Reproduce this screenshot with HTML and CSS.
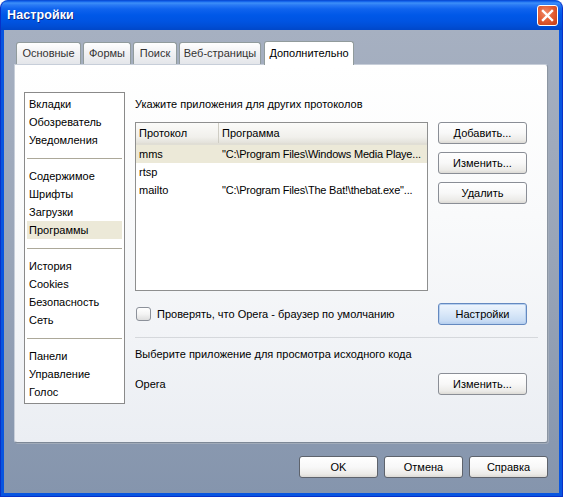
FILE: index.html
```html
<!DOCTYPE html>
<html lang="ru">
<head>
<meta charset="utf-8">
<title>Настройки</title>
<link rel="stylesheet" href="styles.css">
</head>
<body>
<div class="window">
  <div class="titlebar">
    <span class="title">Настройки</span>
    <div class="close">
      <svg width="21" height="21" viewBox="0 0 21 21"><path d="M6 6 L15 15 M15 6 L6 15" stroke="#fff" stroke-width="2.4" stroke-linecap="square"/></svg>
    </div>
  </div>
  <div class="client">
    <div class="tabs">
      <div class="tab t1">Основные</div>
      <div class="tab t2">Формы</div>
      <div class="tab t3">Поиск</div>
      <div class="tab t4">Веб-страницы</div>
      <div class="tab t5 active">Дополнительно</div>
    </div>
    <div class="panel">
      <div class="sidebar">
        <div class="item">Вкладки</div>
        <div class="item">Обозреватель</div>
        <div class="item">Уведомления</div>
        <div class="sep"></div>
        <div class="item">Содержимое</div>
        <div class="item">Шрифты</div>
        <div class="item">Загрузки</div>
        <div class="item sel">Программы</div>
        <div class="sep"></div>
        <div class="item">История</div>
        <div class="item">Cookies</div>
        <div class="item">Безопасность</div>
        <div class="item">Сеть</div>
        <div class="sep"></div>
        <div class="item">Панели</div>
        <div class="item">Управление</div>
        <div class="item">Голос</div>
      </div>
      <div class="content">
        <div class="label">Укажите приложения для других протоколов</div>
        <div class="proto">
          <div class="list">
            <div class="lhead"><div class="c1">Протокол</div><div class="c2">Программа</div></div>
            <div class="row sel"><div class="c1">mms</div><div class="c2">"C:\Program Files\Windows Media Playe...</div></div>
            <div class="row"><div class="c1">rtsp</div><div class="c2"></div></div>
            <div class="row"><div class="c1">mailto</div><div class="c2">"C:\Program Files\The Bat!\thebat.exe"...</div></div>
          </div>
          <div class="btncol">
            <div class="btn">Добавить...</div>
            <div class="btn">Изменить...</div>
            <div class="btn">Удалить</div>
          </div>
        </div>
        <div class="checkrow">
          <span class="cb"></span>
          <span class="cblabel">Проверять, что Opera - браузер по умолчанию</span>
          <div class="btn default">Настройки</div>
        </div>
        <div class="hsep"></div>
        <div class="label2">Выберите приложение для просмотра исходного кода</div>
        <div class="oprow">
          <span class="opname">Opera</span>
          <div class="btn">Изменить...</div>
        </div>
      </div>
    </div>
    <div class="footer">
      <div class="btn fbtn">OK</div>
      <div class="btn fbtn">Отмена</div>
      <div class="btn fbtn">Справка</div>
    </div>
  </div>
</div>
</body>
</html>
```
FILE: styles.css
```css
html, body {
  margin: 0;
  padding: 0;
  background: #ffffff;
}
body {
  font-family: "Liberation Sans", Arial, sans-serif;
  font-size: 11px;
  color: #000;
}
.window {
  width: 563px;
  height: 497px;
  box-sizing: border-box;
  background: #0855e0;
  border-radius: 8px 8px 0 0;
  border: 1px solid #0831c8;
  border-top-color: #0a4ed8;
  display: flex;
  flex-direction: column;
}
.titlebar {
  height: 29px;
  flex: none;
  display: flex;
  align-items: center;
  justify-content: space-between;
  padding: 0 4px 0 6px;
  border-radius: 7px 7px 0 0;
  background: linear-gradient(to bottom, #0a5ae8 0px, #3d8ff8 2px, #2a7af5 4px, #0f63ee 8px, #0058e8 14px, #0054e2 20px, #004ed6 25px, #0047c8 29px);
}
.title {
  color: #fff;
  font-weight: bold;
  font-size: 12.5px;
  text-shadow: 1px 1px 0 #0a2a8a;
  letter-spacing: 0.1px;
  padding-bottom: 1px;
}
.close {
  width: 21px;
  height: 21px;
  box-sizing: border-box;
  border: 1px solid #fff;
  border-radius: 3px;
  background: radial-gradient(circle at 40% 35%, #f08a68 0%, #e25b30 50%, #c23c14 100%);
  margin-bottom: 1px;
  display: flex;
}
.close svg {
  margin: -1px;
}
.client {
  flex: 1;
  margin: 0 3px 3px 3px;
  background: linear-gradient(to bottom, #a6b0c1 0%, #98a4b7 50%, #8595ad 100%);
  padding: 11px 11px 0 10px;
  display: flex;
  flex-direction: column;
}
.tabs {
  display: flex;
  align-items: flex-end;
  gap: 2px;
  height: 24px;
  margin-left: 2px;
  margin-bottom: -1px;
  position: relative;
  z-index: 2;
}
.tab {
  height: 22px;
  margin-bottom: 1px;
  box-sizing: border-box;
  border: 1px solid #919b9c;
  border-bottom: none;
  border-radius: 3px 3px 0 0;
  background: linear-gradient(to bottom, #ffffff 0%, #f3f3f5 40%, #e4e6ea 100%);
  display: flex;
  align-items: center;
  justify-content: center;
  padding-bottom: 1px;
  color: #333;
}
.t1 { width: 65px; }
.t2 { width: 48px; }
.t3 { width: 44px; }
.t4 { width: 82px; }
.t5 { width: 90px; margin-left: 1px; }
.tab.active {
  height: 24px;
  margin-bottom: 0;
  background: #ffffff;
  color: #000;
  padding-bottom: 2px;
}
.panel {
  width: 534px;
  height: 379px;
  flex: none;
  box-sizing: border-box;
  border: 1px solid;
  border-color: #c7ced9 #8b95a2 #7d8896 #c7ced9;
  border-radius: 0 3px 3px 3px;
  box-shadow: 1px 1px 0 #a2acba;
  background: linear-gradient(to bottom, #ffffff 0%, #f9fafb 40%, #ebeef3 100%);
  padding: 27px 0 0 9px;
  display: flex;
  align-items: flex-start;
}
.sidebar {
  width: 101px;
  box-sizing: border-box;
  border: 1px solid #8a8a8a;
  background: #fff;
  padding: 2px 1px 2px 1px;
}
.item {
  height: 18px;
  line-height: 18px;
  padding-left: 2px;
  margin: 0 1px;
  white-space: nowrap;
}
.item.sel {
  background: #ece9d8;
}
.sep {
  height: 1px;
  background: #aca899;
  margin: 9px 1px 8px 1px;
}
.content {
  margin-left: 10px;
  width: 403px;
  display: flex;
  flex-direction: column;
}
.label {
  height: 18px;
  line-height: 18px;
  margin-top: 3px;
}
.proto {
  margin-top: 9px;
  display: flex;
  align-items: flex-start;
  gap: 10px;
}
.list {
  width: 293px;
  height: 169px;
  box-sizing: border-box;
  border: 1px solid #8e8f8f;
  background: #fff;
}
.lhead {
  display: flex;
  height: 22px;
  box-sizing: border-box;
  background: linear-gradient(to bottom, #fbfbf9 0%, #f1f0ec 70%, #e3e1da 100%);
  border-bottom: 2px solid #e0ded5;
}
.lhead .c1 {
  border-right: 1px solid #cfcdc4;
}
.c1, .c2 {
  line-height: 18px;
  white-space: nowrap;
  overflow: hidden;
}
.lhead .c1, .lhead .c2 {
  line-height: 20px;
}
.c1 {
  width: 79px;
  padding-left: 3px;
  flex: none;
}
.c2 {
  flex: 1;
  padding-left: 3px;
}
.row {
  display: flex;
  height: 18px;
}
.row .c2 {
  padding-left: 4px;
  letter-spacing: -0.2px;
}
.row.sel {
  background: #ece9d8;
}
.btncol {
  display: flex;
  flex-direction: column;
  gap: 8px;
}
.btn {
  width: 89px;
  height: 22px;
  box-sizing: border-box;
  border: 1px solid #8a8e96;
  border-radius: 3px;
  background: linear-gradient(to bottom, #ffffff 0%, #f8f8f8 50%, #ecebe8 85%, #dcdad5 100%);
  display: flex;
  align-items: center;
  justify-content: center;
  padding-bottom: 1px;
  white-space: nowrap;
  flex: none;
}
.btn.default {
  border-color: #6489c0;
  background: linear-gradient(to bottom, #eef5fd 0%, #dbe9f9 45%, #c8dcf4 85%, #b4cdee 100%);
  box-shadow: inset 0 0 0 1px #b7d0ef;
}
.checkrow {
  margin-top: 12px;
  height: 22px;
  display: flex;
  align-items: center;
}
.cb {
  width: 15px;
  height: 14px;
  box-sizing: border-box;
  border: 1px solid #8c919a;
  border-radius: 3px;
  background: linear-gradient(to bottom, #ffffff 0%, #f4f4f4 50%, #dedede 100%);
  margin-left: 1px;
  flex: none;
}
.cblabel {
  margin-left: 6px;
  flex: 1;
  white-space: nowrap;
}
.checkrow .btn,
.oprow .btn {
  margin-right: 11px;
}
.hsep {
  height: 1px;
  background: #d5d8dc;
  margin-top: 12px;
}
.label2 {
  margin-top: 7px;
  height: 18px;
  line-height: 18px;
}
.oprow {
  margin-top: 10px;
  height: 22px;
  display: flex;
  align-items: center;
  justify-content: space-between;
}
.footer {
  margin-top: 13px;
  display: flex;
  justify-content: flex-end;
  gap: 6px;
  width: 534px;
}
.fbtn {
  width: 79px;
  border-color: #5e636c;
}
```
